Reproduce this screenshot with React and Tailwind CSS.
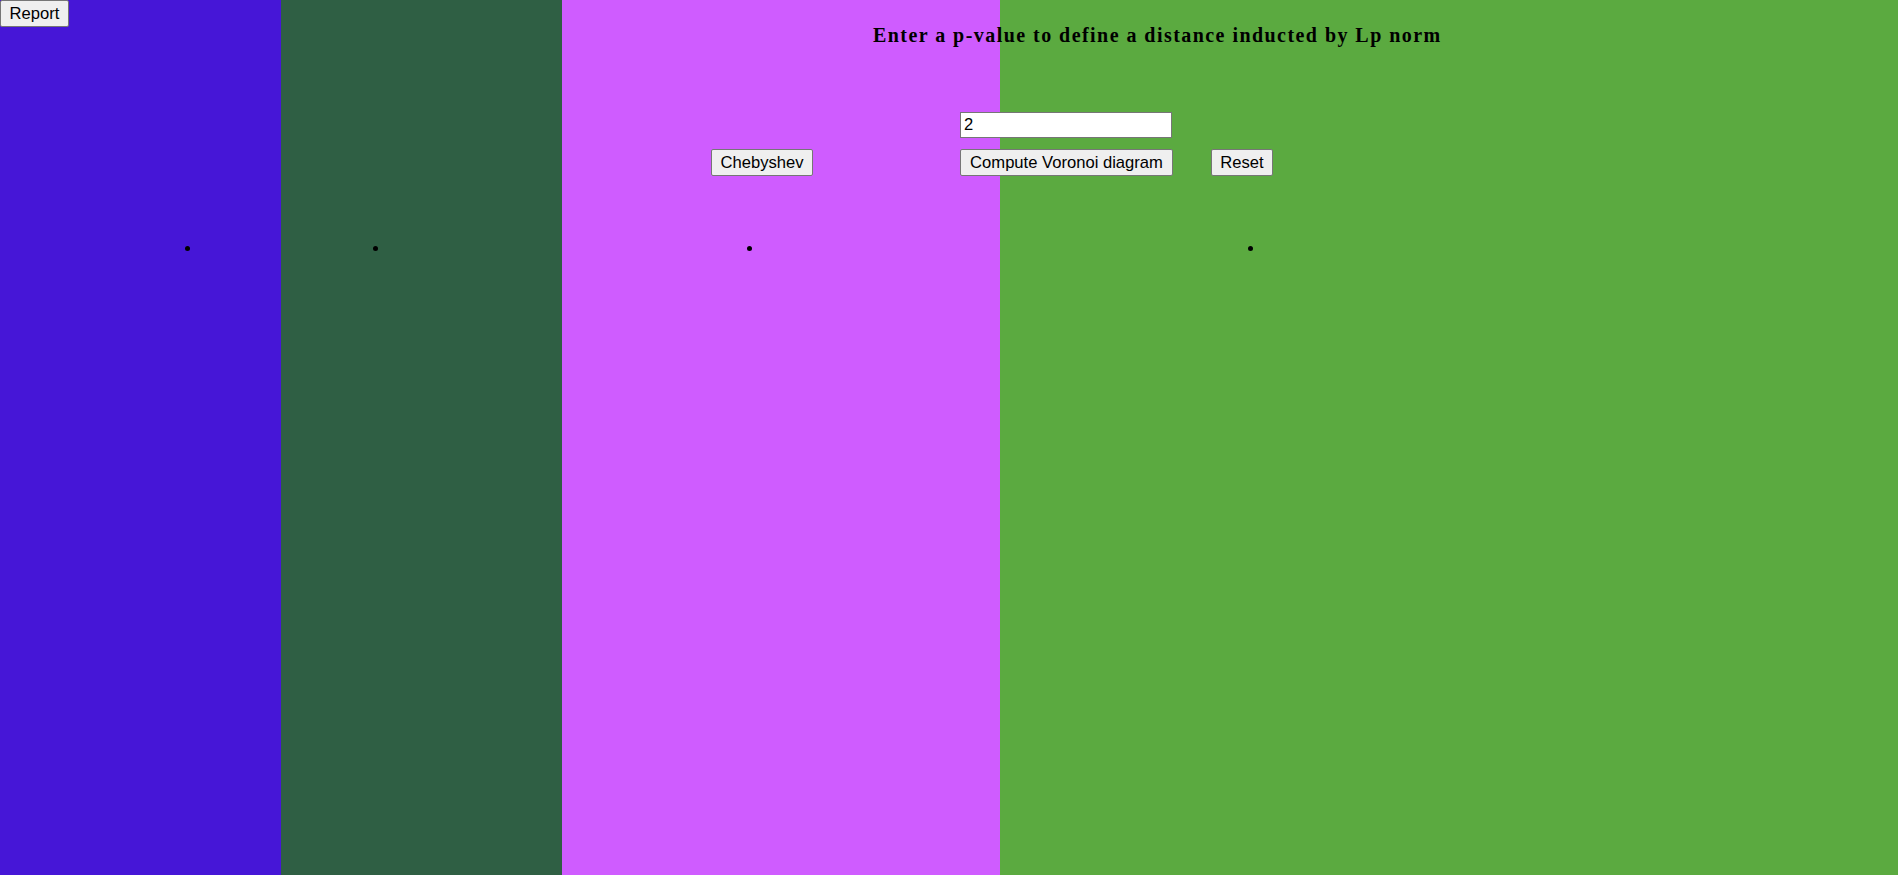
export default function App() {
  const btn =
    "h-[27px] bg-[#efefef] border border-[#767676] rounded-[2px] text-[16.6px] leading-[normal] text-black px-0 flex items-center justify-center";
  return (
    <div
      className="relative w-full h-[875px] overflow-hidden"
      style={{ fontFamily: '"Liberation Sans", Arial, sans-serif' }}
    >
      <div className="absolute inset-0 flex">
        <div className="w-[281px] h-full bg-[#4616d7]" />
        <div className="w-[281px] h-full bg-[#2f5f44]" />
        <div className="w-[438px] h-full bg-[#cf5cff]" />
        <div className="flex-1 h-full bg-[#5baa40]" />
      </div>

      <div className="absolute left-[185px] top-[246px] w-[5px] h-[5px] rounded-full bg-black" />
      <div className="absolute left-[373px] top-[246px] w-[5px] h-[5px] rounded-full bg-black" />
      <div className="absolute left-[747px] top-[246px] w-[5px] h-[5px] rounded-full bg-black" />
      <div className="absolute left-[1248px] top-[246px] w-[5px] h-[5px] rounded-full bg-black" />

      <button className={"absolute left-0 top-0 w-[69px] " + btn}>Report</button>

      <div className="relative flex flex-col">
        <div
          className="ml-[873px] mt-[24px] h-[23px] leading-[23px] text-[20px] tracking-[1.45px] font-bold text-black whitespace-nowrap"
          style={{ fontFamily: '"Liberation Serif", "Times New Roman", serif' }}
        >
          Enter a p-value to define a distance inducted by Lp norm
        </div>
        <input
          type="text"
          defaultValue="2"
          className="ml-[960px] mt-[65px] w-[212px] h-[26px] bg-white border border-[#767676] px-[3px] text-[16.6px] text-black outline-none"
        />
        <div className="mt-[11px] ml-[711px] flex">
          <button className={"w-[102px] " + btn}>Chebyshev</button>
          <button className={"ml-[147px] w-[213px] " + btn}>Compute Voronoi diagram</button>
          <button className={"ml-[38px] w-[62px] " + btn}>Reset</button>
        </div>
      </div>
    </div>
  );
}
